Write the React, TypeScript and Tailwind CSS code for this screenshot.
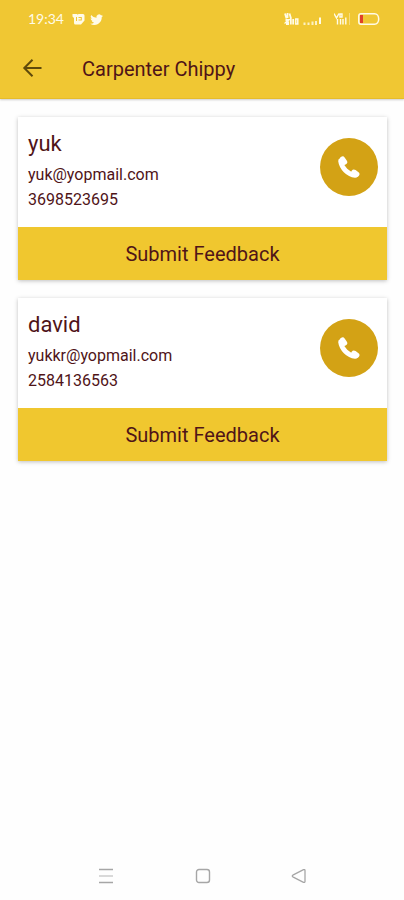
import React from 'react';

interface Contact {
  name: string;
  email: string;
  phone: string;
}

const contacts: Contact[] = [
  { name: 'yuk', email: 'yuk@yopmail.com', phone: '3698523695' },
  { name: 'david', email: 'yukkr@yopmail.com', phone: '2584136563' },
];

function StatusBar() {
  return (
    <div className="flex h-[38px] items-center justify-between pl-7 pr-6 text-[#fffbe8]">
      <div className="flex items-center gap-2">
        <span className="w-9 font-['Lato','Liberation_Sans',sans-serif] text-[14px] leading-5">19:34</span>
        <svg className="h-3 w-[13px]" viewBox="0 0 13 12" aria-hidden="true">
          <path
            fill="currentColor"
            fillRule="evenodd"
            d="M.5 1H5l.7.8.8-.8H11a1.500 1.500 0 0 1 1.500 1.500v5L9 11.500H3.500A1.500 1.500 0 0 1 2 10V5L.5 3.500zM4 4v4h1V4zM6.500 4v1h2.300v1.500H6.500v1h3.300V4z"
          />
        </svg>
        <svg className="-ml-1 h-[15px] w-[15px]" viewBox="0 0 24 24" fill="currentColor" aria-hidden="true">
          <path d="M22.500 5.800a8.500 8.500 0 0 1-2.400.7 4.200 4.200 0 0 0 1.800-2.300 8.400 8.400 0 0 1-2.700 1 4.200 4.200 0 0 0-7.200 3.900A12 12 0 0 1 3.300 4.700a4.200 4.200 0 0 0 1.300 5.600 4.200 4.200 0 0 1-1.900-.5c0 2 1.400 3.800 3.400 4.200a4.200 4.200 0 0 1-1.900.1 4.200 4.200 0 0 0 4 2.900A8.500 8.500 0 0 1 1.900 18.800 12 12 0 0 0 20.400 8.100a8.700 8.700 0 0 0 2.100-2.300z" />
        </svg>
      </div>
      <div className="flex items-center">
        {/* network speed and first SIM */}
        <svg className="mr-3 h-3 w-[38px]" viewBox="0 0 38 12" fill="none" stroke="currentColor" aria-hidden="true">
          <path strokeWidth="1.800" d="M1 .5l1.500 5M3.500 0v5M5.500.5l1.500 5M1.500 7h3L2 9.500h3M2 11.200h3M6.800 5v6.500M9.200 6v5.500" />
          <path strokeWidth="1.500" d="M11.800 6h2v5h-2z" />
          <path strokeWidth="2" opacity=".8" d="M20.500 9.500V12M24.500 9.500V12M28.500 8.500V12M32 8V12" />
          <path strokeWidth="2" d="M36 4.500V11" />
        </svg>
        {/* VoLTE and second SIM */}
        <svg className="mr-2 h-3 w-4" viewBox="0 0 16 12" fill="none" stroke="currentColor" aria-hidden="true">
          <path strokeWidth="1.400" d="M0 .5L2.500 5 5 .5M6 1h2v3H6zM3.500 6v5.500M6.500 6v5.500M9 6v5.500M11.800 4.500v7" />
          <path strokeWidth="1" opacity=".4" d="M15.500 0v12" />
        </svg>
        <svg className="h-3 w-[22px]" viewBox="0 0 22 12" aria-hidden="true">
          <path
            fill="none"
            stroke="currentColor"
            strokeWidth="1.500"
            d="M3 .8h13.500c2.500 0 4.200 2.300 4.200 5.200s-1.700 5.200-4.200 5.200H3A2.200 2.200 0 0 1 .8 9V3A2.200 2.200 0 0 1 3 .8z"
          />
          <path fill="#e0402a" d="M2 2h3v8H2z" />
        </svg>
      </div>
    </div>
  );
}

function AppBar({ title }: { title: string }) {
  return (
    <div className="flex h-[61px] items-center border-b border-[#e6bc2b] pl-[22px]">
      <button type="button" aria-label="Back" className="flex h-5 w-5 items-center justify-center text-[#5f4a0b]">
        <svg className="h-5 w-5" viewBox="0 0 20 20" fill="none" stroke="currentColor" strokeWidth="2" aria-hidden="true">
          <path d="M19.500 10H2.500M10.500 1.800L2.300 10l8.200 8.200" />
        </svg>
      </button>
      <h1 className="ml-10 pt-px text-[20px] leading-6">{title}</h1>
    </div>
  );
}

function ContactCard({ name, email, phone }: Contact) {
  return (
    <li className="bg-white shadow-[0_1px_4px_rgba(0,0,0,0.25)]">
      <div className="flex items-start justify-between pb-[15px] pl-[10px] pr-[9px] pt-3">
        <div>
          <h2 className="mb-1 text-[22px] leading-[29px]">{name}</h2>
          <p className="text-[16px] leading-[25px]">{email}</p>
          <p className="text-[16px] leading-[25px]">{phone}</p>
        </div>
        <button
          type="button"
          aria-label={`Call ${name}`}
          className="mt-[9px] flex h-[58px] w-[58px] items-center justify-center rounded-full bg-[#d3a215] text-white"
        >
          <svg className="h-6 w-6" viewBox="0 0 24 24" fill="none" stroke="currentColor" strokeLinecap="round" aria-hidden="true">
            <path strokeWidth="4.800" d="M3.600 6C4.500 13 11 19.600 18.200 20.400" />
            <path strokeWidth="5.600" d="M5.500 4.200L7.400 7M17 17.400L19.600 19.200" />
          </svg>
        </button>
      </div>
      <button type="button" className="block w-full bg-[#f0c72f] pb-[14px] pt-[15px] text-center text-[20px] leading-6">
        Submit Feedback
      </button>
    </li>
  );
}

function NavigationBar() {
  return (
    <nav className="flex h-12 items-center justify-between pl-[98px] pr-[97px] text-[#a6a6a6]">
      <button type="button" aria-label="Recent apps">
        <svg className="h-4 w-4" viewBox="0 0 16 16" fill="none" stroke="currentColor" aria-hidden="true">
          <path strokeWidth="1.400" d="M1 1.500h14M1 14.500h14" />
          <path strokeWidth="1.400" opacity=".6" d="M1 8h14" />
        </svg>
      </button>
      <button type="button" aria-label="Home">
        <svg className="h-4 w-4" viewBox="0 0 16 16" fill="none" stroke="currentColor" strokeWidth="1.400" aria-hidden="true">
          <rect x="1.500" y="1.500" width="13" height="13" rx="2.500" />
        </svg>
      </button>
      <button type="button" aria-label="Back to previous app">
        <svg className="h-4 w-4" viewBox="0 0 16 16" fill="none" stroke="currentColor" strokeWidth="1.300" strokeLinejoin="round" aria-hidden="true">
          <path d="M1.800 7.200L12.500 1.700c.8-.4 1.500 0 1.500.8v11c0 .8-.7 1.200-1.500.8L1.800 8.800c-.7-.4-.7-1.200 0-1.600z" />
        </svg>
      </button>
    </nav>
  );
}

export default function App() {
  return (
    <div className="flex min-h-screen flex-col bg-[#fefefe] font-['Roboto','Liberation_Sans',sans-serif] text-[#4f1418]">
      <header className="bg-[#f0c733] shadow-[0_1px_2px_rgba(0,0,0,0.2)]">
        <StatusBar />
        <AppBar title="Carpenter Chippy" />
      </header>
      <main className="flex-1 pl-[18px] pr-[17px] pt-[18px]">
        <ul className="flex flex-col gap-[18px]">
          {contacts.map((contact) => (
            <ContactCard key={contact.email} {...contact} />
          ))}
        </ul>
      </main>
      <NavigationBar />
    </div>
  );
}
